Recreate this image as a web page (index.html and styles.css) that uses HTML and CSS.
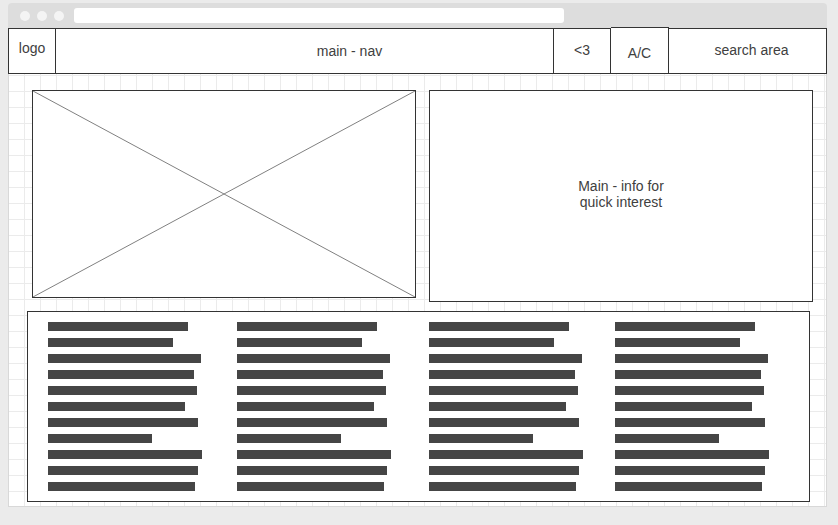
FILE: index.html
```html
<!DOCTYPE html>
<html lang="en">
<head>
    <meta charset="UTF-8">
    <meta name="viewport" content="width=device-width, initial-scale=1.0">
    <title>Home page wireframe</title>
    <link rel="stylesheet" href="styles.css">
</head>
<body>
    <div class="window">
        <div class="titlebar">
            <span class="dot"></span>
            <span class="dot"></span>
            <span class="dot"></span>
            <div class="address"></div>
        </div>

        <header class="nav">
            <div class="cell logo">logo</div>
            <div class="cell main-nav">main - nav</div>
            <div class="cell fav">&lt;3</div>
            <div class="cell account">A/C</div>
            <div class="cell search">search area</div>
        </header>

        <main class="canvas">
            <div class="top-row">
                <div class="hero">
                    <svg viewBox="0 0 100 100" preserveAspectRatio="none">
                        <line x1="0" y1="0" x2="100" y2="100" vector-effect="non-scaling-stroke"/>
                        <line x1="100" y1="0" x2="0" y2="100" vector-effect="non-scaling-stroke"/>
                    </svg>
                </div>
                <div class="info">
                    <p>Main - info for<br>quick interest</p>
                </div>
            </div>

            <div class="text-block">
                <div class="col">
                    <span></span><span></span><span></span><span></span><span></span><span></span>
                    <span></span><span></span><span></span><span></span><span></span>
                </div>
                <div class="col">
                    <span></span><span></span><span></span><span></span><span></span><span></span>
                    <span></span><span></span><span></span><span></span><span></span>
                </div>
                <div class="col">
                    <span></span><span></span><span></span><span></span><span></span><span></span>
                    <span></span><span></span><span></span><span></span><span></span>
                </div>
                <div class="col">
                    <span></span><span></span><span></span><span></span><span></span><span></span>
                    <span></span><span></span><span></span><span></span><span></span>
                </div>
            </div>
        </main>
    </div>
</body>
</html>
```

FILE: styles.css
```css
body {
    margin: 0;
    background: #ebebeb;
    font-family: "Liberation Sans", Arial, sans-serif;
    font-size: 14px;
    color: #404040;
}
.window {
    width: 819px;
    margin: 3px 0 0 8px;
}
.titlebar {
    height: 25px;
    background: #dddddd;
    border-radius: 4px 4px 0 0;
    display: flex;
    align-items: center;
    padding-left: 12px;
}
.dot {
    width: 10px;
    height: 10px;
    border-radius: 50%;
    background: #f4f4f4;
    margin-right: 7px;
}
.address {
    width: 490px;
    height: 15px;
    margin-left: 3px;
    background: #fff;
    border-radius: 3px;
}
.nav {
    display: flex;
    height: 44px;
    background: #fff;
    border: 1px solid #333;
}
.cell {
    display: flex;
    align-items: center;
    justify-content: center;
    box-sizing: border-box;
    border-right: 1px solid #333;
    background: #fff;
}
.logo { width: 47px; padding-bottom: 7px; }
.main-nav { width: 498px; padding-left: 90px; }
.fav { width: 57px; padding-bottom: 3px; }
.account {
    width: 58px;
    margin-top: -2px;
    border-top: 1px solid #333;
    padding-top: 5px;
}
.search {
    flex: 1;
    border-right: none;
    padding: 0 0 3px 8px;
}
.canvas {
    height: 433px;
    box-sizing: border-box;
    padding: 16px 0 0 18px;
    background-color: #fff;
    background-image:
        linear-gradient(to right, #ebebeb 1px, transparent 1px),
        linear-gradient(to bottom, #ebebeb 1px, transparent 1px);
    background-size: 16px 16px;
    background-position: 15px 1px;
    border: 1px solid #d8d8d8;
    border-top: none;
}
.top-row {
    display: flex;
    align-items: flex-start;
    padding-left: 5px;
}
.hero {
    width: 384px;
    height: 208px;
    box-sizing: border-box;
    border: 1px solid #333;
    background: #fff;
}
.hero svg {
    display: block;
    width: 100%;
    height: 100%;
}
.hero line {
    stroke: #808080;
    stroke-width: 1;
}
.info {
    width: 384px;
    height: 212px;
    margin-left: 13px;
    box-sizing: border-box;
    border: 1px solid #333;
    background: #fff;
    display: flex;
    align-items: center;
    justify-content: center;
}
.info p {
    margin: 0 0 4px;
    line-height: 16px;
    text-align: center;
}
.text-block {
    width: 783px;
    box-sizing: border-box;
    margin-top: 9px;
    padding: 10px 0 10px 20px;
    border: 1px solid #333;
    background: #fff;
    display: grid;
    grid-template-columns: 189px 192px 186px 1fr;
}
.col {
    display: flex;
    flex-direction: column;
    gap: 7px;
}
.col span {
    display: block;
    height: 9px;
    background: #454545;
}
.col span:nth-child(1) { width: 140px; }
.col span:nth-child(2) { width: 125px; }
.col span:nth-child(3) { width: 153px; }
.col span:nth-child(4) { width: 146px; }
.col span:nth-child(5) { width: 149px; }
.col span:nth-child(6) { width: 137px; }
.col span:nth-child(7) { width: 150px; }
.col span:nth-child(8) { width: 104px; }
.col span:nth-child(9) { width: 154px; }
.col span:nth-child(10) { width: 150px; }
.col span:nth-child(11) { width: 147px; }
```
